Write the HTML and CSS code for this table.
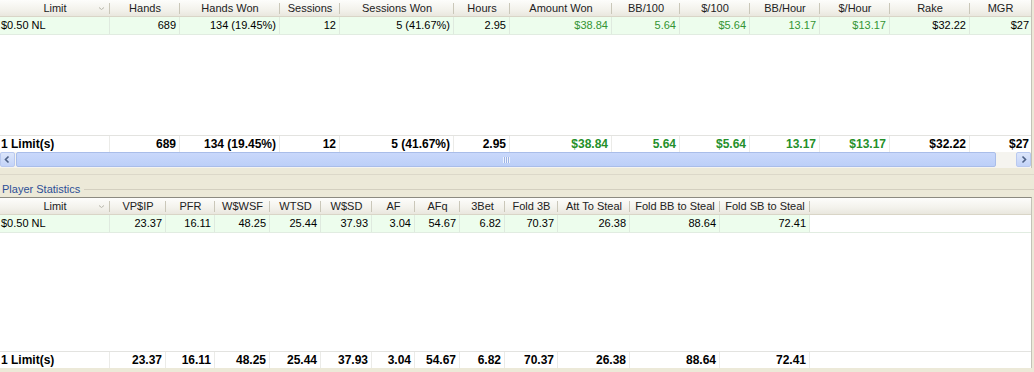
FILE: index.html
```html
<!DOCTYPE html>
<html>
<head>
<meta charset="utf-8">
<link rel="stylesheet" href="styles.css">
</head>
<body>
<div class="panel panel-top">
  <div class="grid g1 hdr">
    <div class="hc hc-limit"><span></span><span>Limit</span><svg width="7" height="5" viewBox="0 0 7 5"><path d="M1 1.5 L3.5 3.5 L6 1.5" fill="none" stroke="#b8b6ac" stroke-width="1"/></svg></div>
    <div class="hc">Hands</div>
    <div class="hc">Hands Won</div>
    <div class="hc">Sessions</div>
    <div class="hc">Sessions Won</div>
    <div class="hc">Hours</div>
    <div class="hc">Amount Won</div>
    <div class="hc">BB/100</div>
    <div class="hc">$/100</div>
    <div class="hc">BB/Hour</div>
    <div class="hc">$/Hour</div>
    <div class="hc">Rake</div>
    <div class="hc hc-last">MGR</div>
  </div>
  <div class="grid g1 row">
    <div class="c first">$0.50 NL</div>
    <div class="c">689</div>
    <div class="c">134 (19.45%)</div>
    <div class="c">12</div>
    <div class="c">5 (41.67%)</div>
    <div class="c">2.95</div>
    <div class="c green">$38.84</div>
    <div class="c green">5.64</div>
    <div class="c green">$5.64</div>
    <div class="c green">13.17</div>
    <div class="c green">$13.17</div>
    <div class="c">$32.22</div>
    <div class="c nb">$27</div>
  </div>
  <div class="spacer"></div>
  <div class="grid g1 foot">
    <div class="c first">1 Limit(s)</div>
    <div class="c">689</div>
    <div class="c">134 (19.45%)</div>
    <div class="c">12</div>
    <div class="c">5 (41.67%)</div>
    <div class="c">2.95</div>
    <div class="c green">$38.84</div>
    <div class="c green">5.64</div>
    <div class="c green">$5.64</div>
    <div class="c green">13.17</div>
    <div class="c green">$13.17</div>
    <div class="c">$32.22</div>
    <div class="c nb">$27</div>
  </div>
  <div class="scrollbar">
    <div class="sbtn"><svg width="13" height="13" viewBox="0 0 13 13"><path d="M7.5 3.5 L4.5 6.5 L7.5 9.5" fill="none" stroke="#4d6185" stroke-width="1.6"/></svg></div>
    <div class="thumb"><span class="grip"></span></div>
    <div class="track"></div>
    <div class="sbtn"><svg width="13" height="13" viewBox="0 0 13 13"><path d="M5.5 3.5 L8.5 6.5 L5.5 9.5" fill="none" stroke="#4d6185" stroke-width="1.6"/></svg></div>
  </div>
</div>
<div class="gap">
  <div class="gap-rule"></div>
  <div class="label-row"><span class="label">Player Statistics</span><span class="label-line"></span></div>
</div>
<div class="panel panel-bottom">
  <div class="grid g2 hdr">
    <div class="hc hc-limit"><span></span><span>Limit</span><svg width="7" height="5" viewBox="0 0 7 5"><path d="M1 1.5 L3.5 3.5 L6 1.5" fill="none" stroke="#b8b6ac" stroke-width="1"/></svg></div>
    <div class="hc">VP$IP</div>
    <div class="hc">PFR</div>
    <div class="hc">W$WSF</div>
    <div class="hc">WTSD</div>
    <div class="hc">W$SD</div>
    <div class="hc">AF</div>
    <div class="hc">AFq</div>
    <div class="hc">3Bet</div>
    <div class="hc">Fold 3B</div>
    <div class="hc">Att To Steal</div>
    <div class="hc">Fold BB to Steal</div>
    <div class="hc">Fold SB to Steal</div>
    <div class="hc hc-last"></div>
  </div>
  <div class="grid g2 row">
    <div class="c first">$0.50 NL</div>
    <div class="c">23.37</div>
    <div class="c">16.11</div>
    <div class="c">48.25</div>
    <div class="c">25.44</div>
    <div class="c">37.93</div>
    <div class="c">3.04</div>
    <div class="c">54.67</div>
    <div class="c">6.82</div>
    <div class="c">70.37</div>
    <div class="c">26.38</div>
    <div class="c">88.64</div>
    <div class="c">72.41</div>
    <div class="c empty"></div>
  </div>
  <div class="spacer"></div>
  <div class="grid g2 foot">
    <div class="c first">1 Limit(s)</div>
    <div class="c">23.37</div>
    <div class="c">16.11</div>
    <div class="c">48.25</div>
    <div class="c">25.44</div>
    <div class="c">37.93</div>
    <div class="c">3.04</div>
    <div class="c">54.67</div>
    <div class="c">6.82</div>
    <div class="c">70.37</div>
    <div class="c">26.38</div>
    <div class="c">88.64</div>
    <div class="c">72.41</div>
    <div class="c empty"></div>
  </div>
</div>
</body>
</html>
```
FILE: styles.css
```css
html, body {
  margin: 0;
  padding: 0;
}
body {
  width: 1034px;
  height: 372px;
  overflow: hidden;
  background: #ece9d8;
  font-family: "Liberation Sans", Arial, sans-serif;
  font-size: 11px;
  color: #000;
}
.panel {
  width: 1031px;
  background: #fff;
  border-right: 1px solid #c4c2b8;
  display: flex;
  flex-direction: column;
  overflow: hidden;
}
.panel-top {
  height: 168px;
}
.panel-bottom {
  height: 170px;
  border-top: 1px solid #8c8a80;
}
.grid {
  display: grid;
}
.g1 {
  grid-template-columns: 110px 70px 100px 60px 114px 56px 102px 68px 70px 70px 70px 80px 1fr;
}
.g2 {
  grid-template-columns: 110px 56px 49px 55px 51px 51px 43px 45px 45px 53px 72px 90px 90px 1fr;
}
.hdr {
  height: 16px;
  border-bottom: 1px solid #d9d5c7;
  background: linear-gradient(#fdfdfb, #f3f2ec 60%, #e9e7de);
}
.hc {
  line-height: 16px;
  text-align: center;
  font-weight: 400;
  color: #222;
  white-space: nowrap;
  overflow: hidden;
  background: linear-gradient(#cac7b9, #cac7b9) no-repeat right 0 top 3px / 1px 11px;
}
.hc-last {
  background: none;
}
.hc-limit {
  display: grid;
  grid-template-columns: 12px 1fr 12px;
  align-items: center;
}
.hc-limit svg {
  display: block;
}
.row {
  height: 17px;
  background: #edfded;
  border-bottom: 1px solid #e1ece1;
}
.foot {
  height: 16px;
  border-top: 1px solid #e3e3e0;
  font-weight: bold;
  font-size: 12px;
}
.c {
  line-height: 16px;
  text-align: right;
  padding: 0 3px 0 2px;
  white-space: nowrap;
  overflow: hidden;
  border-right: 1px solid #dfeadf;
}
.foot .c {
  border-right-color: #ebebe8;
}
.c.first {
  text-align: left;
  padding-left: 1px;
}
.c.nb {
  border-right: none;
  padding-right: 2px;
}
.c.empty {
  border-right: none;
  background: #fff;
}
.green {
  color: #349434;
}
.foot .green {
  color: #24902a;
}
.spacer {
  flex: 1;
  background: #fff;
}
.scrollbar {
  height: 16px;
  display: flex;
  background: #f5f4ef;
}
.sbtn {
  width: 15px;
  height: 15px;
  box-sizing: border-box;
  border: 1px solid #b9c9ef;
  border-radius: 2px;
  background: linear-gradient(#dce6fb, #c3d3f8);
  display: flex;
  align-items: center;
  justify-content: center;
}
.thumb {
  flex: 1;
  margin: 0 0 1px 1px;
  box-sizing: border-box;
  border: 1px solid #a9bde9;
  border-radius: 2px;
  background: linear-gradient(#c9d8fb, #bccff8);
  display: flex;
  align-items: center;
  justify-content: center;
}
.grip {
  width: 7px;
  height: 6px;
  background: repeating-linear-gradient(90deg, #eef3fe 0 1px, #9fb4e4 1px 2px);
}
.track {
  width: 20px;
}
.gap {
  height: 29px;
  padding-top: 6px;
  box-sizing: border-box;
}
.gap-rule {
  height: 1px;
  background: #dcd8c9;
}
.label-row {
  display: flex;
  align-items: center;
  height: 14px;
  margin-top: 7px;
}
.label {
  color: #2c4f96;
  padding-left: 2px;
  padding-right: 4px;
}
.label-line {
  flex: 1;
  height: 1px;
  background: #d3cfbf;
}
```
